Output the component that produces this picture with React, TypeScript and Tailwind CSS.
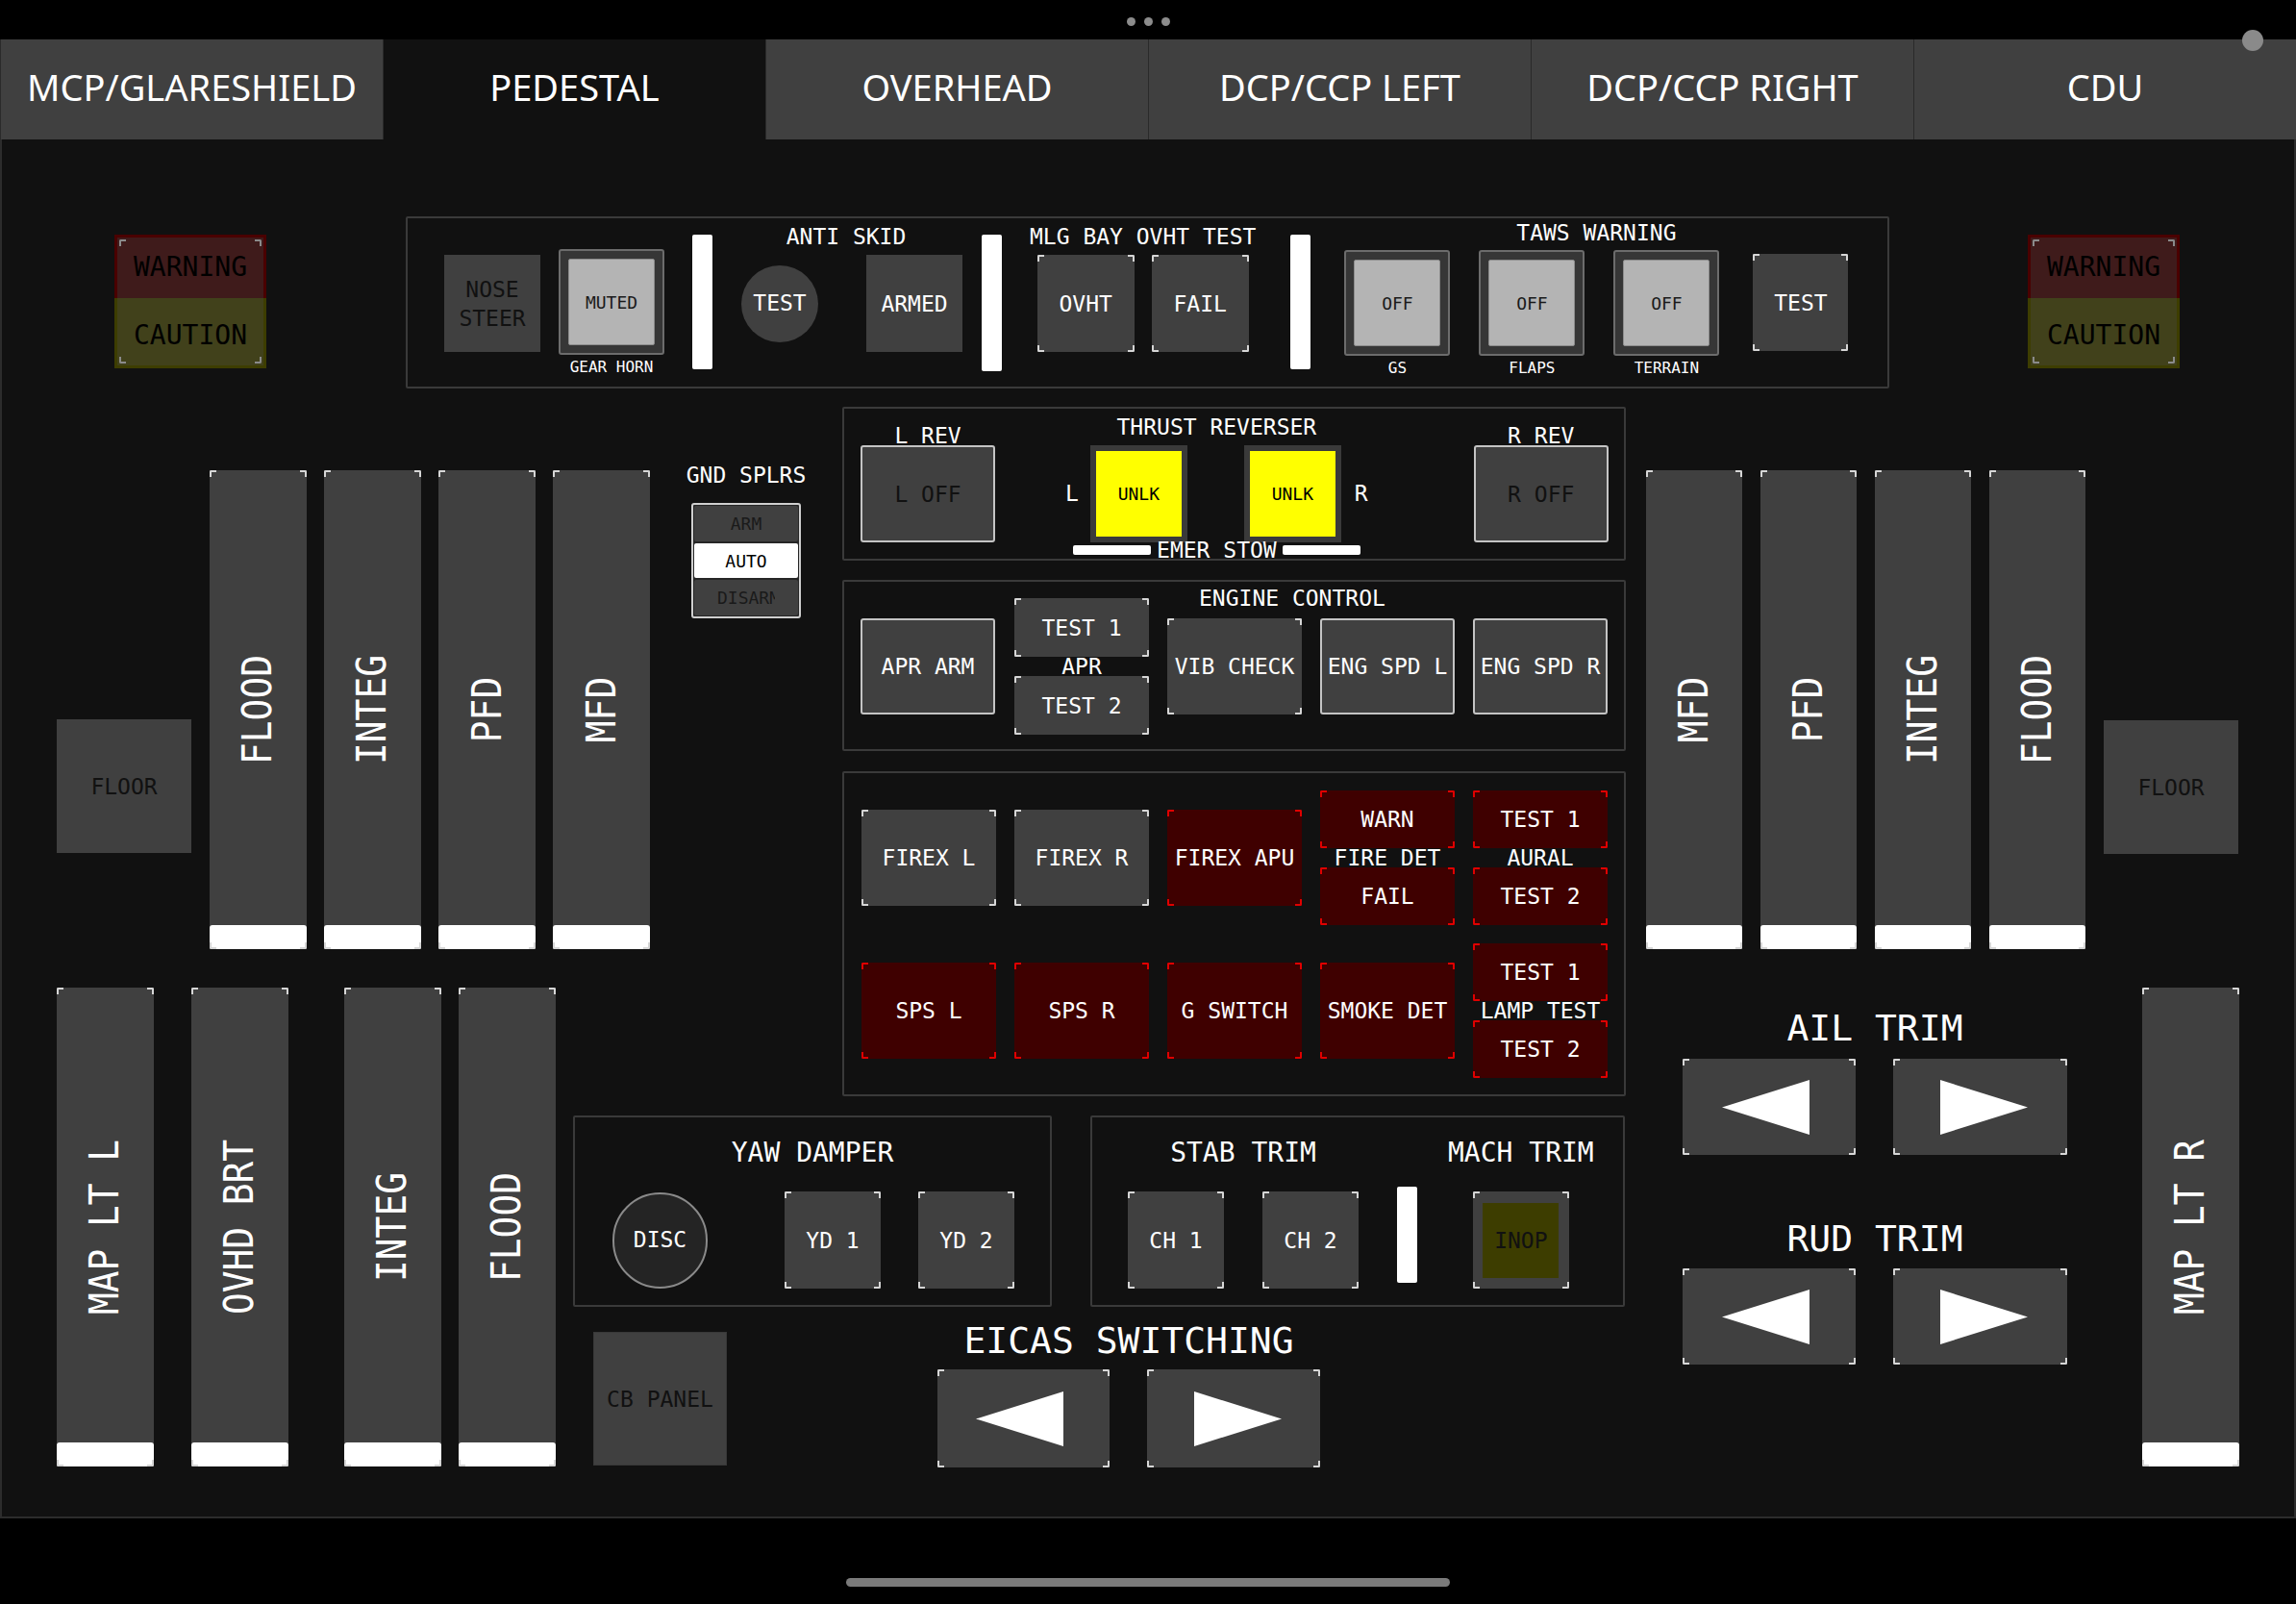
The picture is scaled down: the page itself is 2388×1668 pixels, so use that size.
import React from "react";

const mono = "font-['DejaVu_Sans_Mono',monospace]";

const tabs = ["MCP/GLARESHIELD", "PEDESTAL", "OVERHEAD", "DCP/CCP LEFT", "DCP/CCP RIGHT", "CDU"];

function Corners({ color = "border-[#d6d6d6]" }: { color?: string }) {
  return (
    <div className="pointer-events-none absolute inset-0">
      <span className={`absolute left-0 top-0 h-[7px] w-[7px] rounded-tl-[2px] border-l-2 border-t-2 ${color}`} />
      <span className={`absolute right-0 top-0 h-[7px] w-[7px] rounded-tr-[2px] border-r-2 border-t-2 ${color}`} />
      <span className={`absolute bottom-0 left-0 h-[7px] w-[7px] rounded-bl-[2px] border-b-2 border-l-2 ${color}`} />
      <span className={`absolute bottom-0 right-0 h-[7px] w-[7px] rounded-br-[2px] border-b-2 border-r-2 ${color}`} />
    </div>
  );
}

function Btn({
  className = "",
  corners = false,
  red = false,
  children,
}: {
  className?: string;
  corners?: boolean;
  red?: boolean;
  children?: React.ReactNode;
}) {
  return (
    <div className={`relative flex shrink-0 items-center justify-center text-center leading-[28px] ${mono} ${className}`}>
      {corners && <Corners color={red ? "border-[#e00000]" : "border-[#d6d6d6]"} />}
      {children}
    </div>
  );
}

function Bar({ className = "" }: { className?: string }) {
  return <div className={`w-[21px] shrink-0 rounded-[2px] bg-white ${className}`} />;
}

function LitSwitch({ text, label }: { text: string; label: string }) {
  return (
    <div className="flex w-[110px] shrink-0 flex-col items-center">
      <div className="h-[110px] w-[110px] rounded-[3px] border-2 border-[#6c6c6c] bg-[#363636] p-[8px]">
        <div className="flex h-full w-full items-center justify-center rounded-[2px] border border-[#8c8c8c] bg-[#b4b4b4] text-[18px] text-[#1a1a1a]">
          {text}
        </div>
      </div>
      <div className="mt-[3px] text-[16px] leading-[20px] text-white">{label}</div>
    </div>
  );
}

function Unlk({ className = "" }: { className?: string }) {
  return (
    <div className={`h-[101px] w-[101px] shrink-0 bg-[#3a3a3a] p-[6px] ${className}`}>
      <div className="flex h-full w-full items-center justify-center bg-[#ffff00] text-[18px] text-black">UNLK</div>
    </div>
  );
}

function VLight({ label, className = "w-[101px]" }: { label: string; className?: string }) {
  return (
    <div className={`relative flex h-[498px] shrink-0 flex-col bg-[#404040] ${className}`}>
      <Corners />
      <div className="flex flex-1 items-center justify-center pt-[25px]">
        <span className={`-rotate-90 scale-x-[0.9] whitespace-nowrap text-[42px] leading-none text-white ${mono}`}>
          {label}
        </span>
      </div>
      <div className="h-[25px] rounded-[3px] bg-white" />
    </div>
  );
}

function WarnCaution({ className = "" }: { className?: string }) {
  return (
    <div className={`flex h-[139px] w-[158px] flex-col text-[28px] leading-none text-black ${mono} ${className}`}>
      <div className="flex flex-1 items-center justify-center border-[3px] border-b-0 border-[#4a0000] bg-[#3f1b1b] pb-[1px]">
        WARNING
      </div>
      <div className="flex flex-1 items-center justify-center border-[3px] border-t-0 border-[#3d3d00] bg-[#41411b] pt-[8px]">
        CAUTION
      </div>
      <div className="absolute inset-[5px]">
        <Corners color="border-[#8a8a8a]" />
      </div>
    </div>
  );
}

function SplitCol({ top, mid, bot }: { top: string; mid: string; bot: string }) {
  return (
    <div className="flex w-[140px] shrink-0 flex-col items-center">
      <Btn corners red className="h-[60px] w-[140px] bg-[#3f0000]">
        {top}
      </Btn>
      <div className="whitespace-nowrap leading-[20px]">{mid}</div>
      <Btn corners red className="h-[60px] w-[140px] bg-[#3f0000]">
        {bot}
      </Btn>
    </div>
  );
}

function Arrow({ dir, className = "" }: { dir: "left" | "right"; className?: string }) {
  return (
    <Btn corners className={`bg-[#404040] ${className}`}>
      {dir === "left" ? (
        <svg width="91" height="57" viewBox="0 0 91 57" className="-translate-x-[4px]">
          <polygon points="0,28.5 91,0 91,57" fill="#ffffff" />
        </svg>
      ) : (
        <svg width="91" height="57" viewBox="0 0 91 57" className="translate-x-[4px]">
          <polygon points="0,0 91,28.5 0,57" fill="#ffffff" />
        </svg>
      )}
    </Btn>
  );
}

const box = "rounded-[2px] border-2 border-[#3a3a3a]";
const gray = "bg-[#404040] text-white";
const outlined = "rounded-[3px] border-2 border-[#c4c4c4] bg-[#404040]";

export default function App() {
  return (
    <div className="relative flex h-[1668px] w-[2388px] flex-col overflow-hidden bg-black">
      {/* status strip */}
      <div className="flex h-[41px] justify-center gap-[9px] pt-[18px]">
        <span className="h-[9px] w-[9px] rounded-full bg-[#8c8c8c]" />
        <span className="h-[9px] w-[9px] rounded-full bg-[#8c8c8c]" />
        <span className="h-[9px] w-[9px] rounded-full bg-[#8c8c8c]" />
      </div>

      {/* tabs */}
      <div className="flex h-[104px] font-['Noto_Sans',sans-serif] text-[38px] text-white">
        {tabs.map((t, i) => (
          <div
            key={t}
            className={`flex flex-1 items-center justify-center border-l border-[#2a2a2a] pb-[6px] ${
              i === 1 ? "bg-[#111111]" : "bg-[#404040]"
            }`}
          >
            {t}
          </div>
        ))}
      </div>

      {/* pedestal panel */}
      <div
        className={`relative h-[1434px] shrink-0 bg-[#111111] text-[23px] text-white shadow-[inset_2px_0_0_#2c2c2c,inset_-2px_0_0_#2c2c2c,inset_0_-2px_0_#2c2c2c] ${mono}`}
      >
        <WarnCaution className="absolute left-[119px] top-[99px]" />
        <WarnCaution className="absolute left-[2109px] top-[99px]" />

        {/* top row: nose steer / anti skid / mlg / taws */}
        <div className={`absolute left-[422px] top-[80px] flex h-[179px] w-[1543px] items-start ${box}`}>
          <Btn className="ml-[38px] mt-[38px] h-[101px] w-[100px] bg-[#404040] leading-[30px] text-[#111]">
            NOSE
            <br />
            STEER
          </Btn>
          <div className="ml-[19px] mt-[32px]">
            <LitSwitch text="MUTED" label="GEAR HORN" />
          </div>
          <Bar className="ml-[29px] mt-[17px] h-[140px]" />
          <div className="ml-[30px] mt-[5px] flex shrink-0 flex-col items-center">
            <div className="mr-[12px] leading-[28px]">ANTI SKID</div>
            <div className="mt-[5px] flex items-center gap-[50px]">
              <div className="flex h-[80px] w-[80px] items-center justify-center rounded-full bg-[#404040]">TEST</div>
              <Btn className={`h-[101px] w-[100px] ${gray}`}>ARMED</Btn>
            </div>
          </div>
          <Bar className="ml-[20px] mt-[17px] h-[142px]" />
          <div className="ml-[29px] mt-[5px] flex shrink-0 flex-col items-center">
            <div className="leading-[28px]">MLG BAY OVHT TEST</div>
            <div className="mt-[5px] flex gap-[18px]">
              <Btn corners className={`h-[101px] w-[101px] ${gray}`}>
                OVHT
              </Btn>
              <Btn corners className={`h-[101px] w-[101px] ${gray}`}>
                FAIL
              </Btn>
            </div>
          </div>
          <Bar className="ml-[36px] mt-[17px] h-[140px]" />
          <div className="ml-[35px] mt-[1px] flex shrink-0 flex-col items-center">
            <div className="leading-[28px]">TAWS WARNING</div>
            <div className="mt-[4px] flex items-start">
              <LitSwitch text="OFF" label="GS" />
              <div className="ml-[30px]">
                <LitSwitch text="OFF" label="FLAPS" />
              </div>
              <div className="ml-[30px]">
                <LitSwitch text="OFF" label="TERRAIN" />
              </div>
              <Btn corners className={`ml-[35px] mt-[4px] h-[101px] w-[99px] ${gray}`}>
                TEST
              </Btn>
            </div>
          </div>
        </div>

        {/* gnd spoilers */}
        <div className="absolute left-[700px] top-[335px] flex w-[152px] flex-col items-center">
          <div className="leading-[28px]">GND SPLRS</div>
          <div className="mt-[15px] flex h-[120px] w-[114px] flex-col gap-[2px] rounded-[3px] border-2 border-[#cfcfcf] bg-[#262626] p-[1px] text-[18px]">
            <div className="flex flex-1 items-center justify-center rounded-[2px] bg-[#404040] text-[#1a1a1a]">ARM</div>
            <div className="flex flex-1 items-center justify-center rounded-[2px] bg-white text-black">AUTO</div>
            <div className="flex flex-1 items-center justify-center rounded-[2px] bg-[#404040] text-[#1a1a1a]">
              <span className="w-[60px] overflow-hidden whitespace-nowrap">DISARM</span>
            </div>
          </div>
        </div>

        {/* upper left lights */}
        <div className="absolute left-[59px] top-[344px] flex items-start">
          <Btn className="mt-[259px] h-[139px] w-[140px] bg-[#404040] text-[#111]">FLOOR</Btn>
          <div className="ml-[19px] flex gap-[18px]">
            <VLight label="FLOOD" />
            <VLight label="INTEG" />
            <VLight label="PFD" />
            <VLight label="MFD" />
          </div>
        </div>

        {/* upper right lights */}
        <div className="absolute left-[1712px] top-[344px] flex items-start">
          <div className="flex gap-[19px]">
            <VLight label="MFD" className="w-[100px]" />
            <VLight label="PFD" className="w-[100px]" />
            <VLight label="INTEG" className="w-[100px]" />
            <VLight label="FLOOD" className="w-[100px]" />
          </div>
          <Btn className="ml-[19px] mt-[260px] h-[139px] w-[140px] bg-[#404040] text-[#111]">FLOOR</Btn>
        </div>

        {/* thrust reverser */}
        <div className={`absolute left-[876px] top-[278px] flex h-[160px] w-[815px] items-start ${box}`}>
          <div className="ml-[17px] mt-[18px] flex shrink-0 flex-col items-center">
            <div className="leading-[20px]">L REV</div>
            <Btn className={`h-[101px] w-[140px] text-[#111] ${outlined}`}>L OFF</Btn>
          </div>
          <div className="ml-[73px] mt-[9px] flex shrink-0 flex-col items-center">
            <div className="leading-[20px]">THRUST REVERSER</div>
            <div className="mt-[9px] flex items-center">
              <span className="leading-none">L</span>
              <Unlk className="ml-[12px]" />
              <Unlk className="ml-[59px]" />
              <span className="ml-[14px] leading-none">R</span>
            </div>
            <div className="mt-[-2px] flex items-center">
              <div className="h-[10px] w-[81px] rounded-[2px] bg-white" />
              <span className="mx-[6px] leading-[20px]">EMER STOW</span>
              <div className="h-[10px] w-[81px] rounded-[2px] bg-white" />
            </div>
          </div>
          <div className="ml-[110px] mt-[18px] flex shrink-0 flex-col items-center">
            <div className="leading-[20px]">R REV</div>
            <Btn className={`h-[101px] w-[140px] text-[#111] ${outlined}`}>R OFF</Btn>
          </div>
        </div>

        {/* engine control */}
        <div className={`absolute left-[876px] top-[458px] flex h-[178px] w-[815px] items-start ${box}`}>
          <Btn className={`ml-[17px] mt-[38px] h-[100px] w-[140px] text-white ${outlined}`}>APR ARM</Btn>
          <div className="ml-[20px] mt-[17px] flex shrink-0 flex-col items-center">
            <Btn corners className={`h-[61px] w-[140px] ${gray}`}>
              TEST 1
            </Btn>
            <div className="leading-[20px]">APR</div>
            <Btn corners className={`h-[61px] w-[140px] ${gray}`}>
              TEST 2
            </Btn>
          </div>
          <div className="ml-[19px] mt-[7px] flex shrink-0 flex-col items-start">
            <div className="ml-[33px] leading-[20px]">ENGINE CONTROL</div>
            <div className="mt-[11px] flex gap-[19px]">
              <Btn corners className={`h-[100px] w-[140px] ${gray}`}>
                VIB CHECK
              </Btn>
              <Btn className={`h-[100px] w-[140px] text-white ${outlined}`}>ENG SPD L</Btn>
              <Btn className={`h-[100px] w-[140px] text-white ${outlined}`}>ENG SPD R</Btn>
            </div>
          </div>
        </div>

        {/* fire panel */}
        <div className={`absolute left-[876px] top-[657px] flex h-[338px] w-[815px] flex-col ${box}`}>
          <div className="ml-[18px] mt-[18px] flex items-start gap-[19px]">
            <Btn corners className={`mt-[20px] h-[100px] w-[140px] ${gray}`}>
              FIREX L
            </Btn>
            <Btn corners className={`mt-[20px] h-[100px] w-[140px] ${gray}`}>
              FIREX R
            </Btn>
            <Btn corners red className="mt-[20px] h-[100px] w-[140px] bg-[#3f0000]">
              FIREX APU
            </Btn>
            <SplitCol top="WARN" mid="FIRE DET" bot="FAIL" />
            <SplitCol top="TEST 1" mid="AURAL" bot="TEST 2" />
          </div>
          <div className="ml-[18px] mt-[19px] flex items-start gap-[19px]">
            <Btn corners red className="mt-[20px] h-[100px] w-[140px] bg-[#3f0000]">
              SPS L
            </Btn>
            <Btn corners red className="mt-[20px] h-[100px] w-[140px] bg-[#3f0000]">
              SPS R
            </Btn>
            <Btn corners red className="mt-[20px] h-[100px] w-[140px] bg-[#3f0000]">
              G SWITCH
            </Btn>
            <Btn corners red className="mt-[20px] h-[100px] w-[140px] bg-[#3f0000]">
              SMOKE DET
            </Btn>
            <SplitCol top="TEST 1" mid="LAMP TEST" bot="TEST 2" />
          </div>
        </div>

        {/* lower left lights */}
        <div className="absolute left-[59px] top-[882px] flex">
          <VLight label="MAP LT L" />
          <VLight label="OVHD BRT" className="ml-[39px] w-[101px]" />
          <VLight label="INTEG" className="ml-[58px] w-[101px]" />
          <VLight label="FLOOD" className="ml-[18px] w-[101px]" />
        </div>

        {/* yaw damper */}
        <div className={`absolute left-[596px] top-[1015px] flex h-[199px] w-[498px] flex-col items-center ${box}`}>
          <div className="mt-[20px] text-[28px] leading-[34px]">YAW DAMPER</div>
          <div className="ml-[39px] mt-[23px] flex items-center self-start">
            <div className="flex h-[100px] w-[99px] items-center justify-center rounded-full border-2 border-[#8a8a8a] bg-[#242424]">
              DISC
            </div>
            <Btn corners className={`ml-[80px] h-[101px] w-[100px] ${gray}`}>
              YD 1
            </Btn>
            <Btn corners className={`ml-[39px] h-[101px] w-[100px] ${gray}`}>
              YD 2
            </Btn>
          </div>
        </div>

        {/* stab / mach trim */}
        <div className={`absolute left-[1134px] top-[1015px] flex h-[199px] w-[556px] items-start ${box}`}>
          <div className="ml-[37px] mt-[20px] flex shrink-0 flex-col items-center">
            <div className="text-[28px] leading-[34px]">STAB TRIM</div>
            <div className="mt-[23px] flex gap-[40px]">
              <Btn corners className={`h-[101px] w-[100px] ${gray}`}>
                CH 1
              </Btn>
              <Btn corners className={`h-[101px] w-[100px] ${gray}`}>
                CH 2
              </Btn>
            </div>
          </div>
          <Bar className="ml-[40px] mt-[72px] h-[100px] w-[20px]" />
          <div className="ml-[32px] mt-[20px] flex shrink-0 flex-col items-center">
            <div className="text-[28px] leading-[34px]">MACH TRIM</div>
            <Btn corners className="mt-[23px] h-[101px] w-[100px] bg-[#404040]">
              <div className="flex h-[78px] w-[79px] items-center justify-center bg-[#3d3d00] text-[#111]">INOP</div>
            </Btn>
          </div>
        </div>

        {/* cb panel */}
        <Btn className="absolute left-[617px] top-[1240px] h-[139px] w-[139px] border border-[#383838] bg-[#404040] text-[#111]">
          CB PANEL
        </Btn>

        {/* eicas switching */}
        <div className="absolute left-[975px] top-[1227px] flex w-[398px] flex-col items-center">
          <div className="text-[38px] leading-[44px]">EICAS SWITCHING</div>
          <div className="mt-[8px] flex gap-[39px]">
            <Arrow dir="left" className="h-[102px] w-[179px]" />
            <Arrow dir="right" className="h-[102px] w-[180px]" />
          </div>
        </div>

        {/* ail / rud trim */}
        <div className="absolute left-[1750px] top-[902px] flex w-[400px] flex-col items-center">
          <div className="text-[38px] leading-[44px]">AIL TRIM</div>
          <div className="mt-[10px] flex gap-[39px]">
            <Arrow dir="left" className="h-[100px] w-[180px]" />
            <Arrow dir="right" className="h-[100px] w-[181px]" />
          </div>
          <div className="mt-[65px] text-[38px] leading-[44px]">RUD TRIM</div>
          <div className="mt-[9px] flex gap-[39px]">
            <Arrow dir="left" className="h-[100px] w-[180px]" />
            <Arrow dir="right" className="h-[100px] w-[181px]" />
          </div>
        </div>

        {/* map light right */}
        <div className="absolute left-[2228px] top-[882px]">
          <VLight label="MAP LT R" />
        </div>
      </div>

      {/* home indicator */}
      <div className="flex flex-1 justify-center">
        <div className="mt-[62px] h-[9px] w-[628px] rounded-full bg-[#7a7a7a]" />
      </div>

      <div className="absolute left-[2332px] top-[31px] h-[22px] w-[22px] rounded-full bg-[#8a8a8a]" />
    </div>
  );
}
